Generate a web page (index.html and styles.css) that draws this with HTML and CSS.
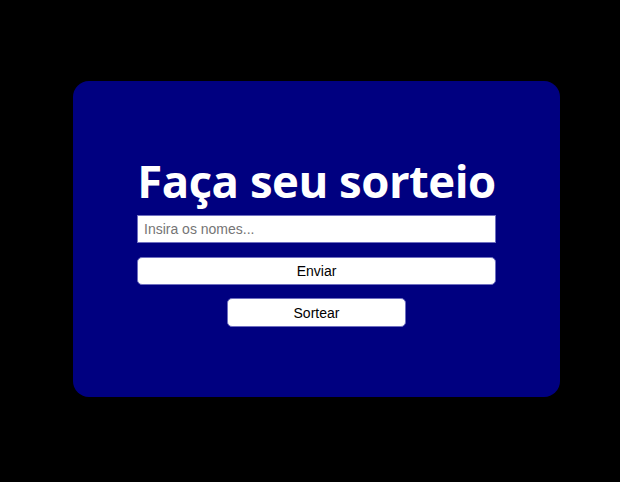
FILE: index.html
```html
<!DOCTYPE html>
<html lang="pt-BR">
<head>
<meta charset="utf-8">
<title>Sorteio</title>
<link rel="stylesheet" href="styles.css">
</head>
<body>
<main class="card">
  <h1 class="title">Faça seu sorteio</h1>
  <input class="names" type="text" placeholder="Insira os nomes...">
  <button class="btn btn-wide">Enviar</button>
  <button class="btn btn-small">Sortear</button>
</main>
</body>
</html>
```

FILE: styles.css
```css
html, body {
  margin: 0;
  background: #000;
}
body {
  padding: 81px 0 0 73px;
}
.card {
  box-sizing: border-box;
  width: 487px;
  height: 316px;
  background: #000080;
  border-radius: 16px;
  display: flex;
  flex-direction: column;
  align-items: center;
  padding-top: 65px;
}
.title {
  margin: 0;
  color: #fff;
  font-family: "Open Sans", "Noto Sans", sans-serif;
  font-weight: 700;
  font-size: 45.5px;
  line-height: 69px;
  letter-spacing: -0.5px;
}
.names {
  box-sizing: border-box;
  width: 359px;
  height: 28px;
  margin: 0;
  padding: 0 6px;
  border: 1px solid #6f6fc0;
  border-radius: 0;
  background: #fff;
  font-family: "Liberation Sans", Arial, sans-serif;
  font-size: 14px;
  color: #000;
  outline: none;
}
.names::placeholder {
  color: #757575;
}
.btn {
  box-sizing: border-box;
  border: 1px solid #6f6fc0;
  border-radius: 5px;
  background: #fff;
  color: #000;
  font-family: "Liberation Sans", Arial, sans-serif;
  font-size: 14px;
  padding: 0;
}
.btn-wide {
  width: 359px;
  height: 28px;
  margin-top: 14px;
}
.btn-small {
  width: 179px;
  height: 29px;
  margin-top: 13px;
}
```
